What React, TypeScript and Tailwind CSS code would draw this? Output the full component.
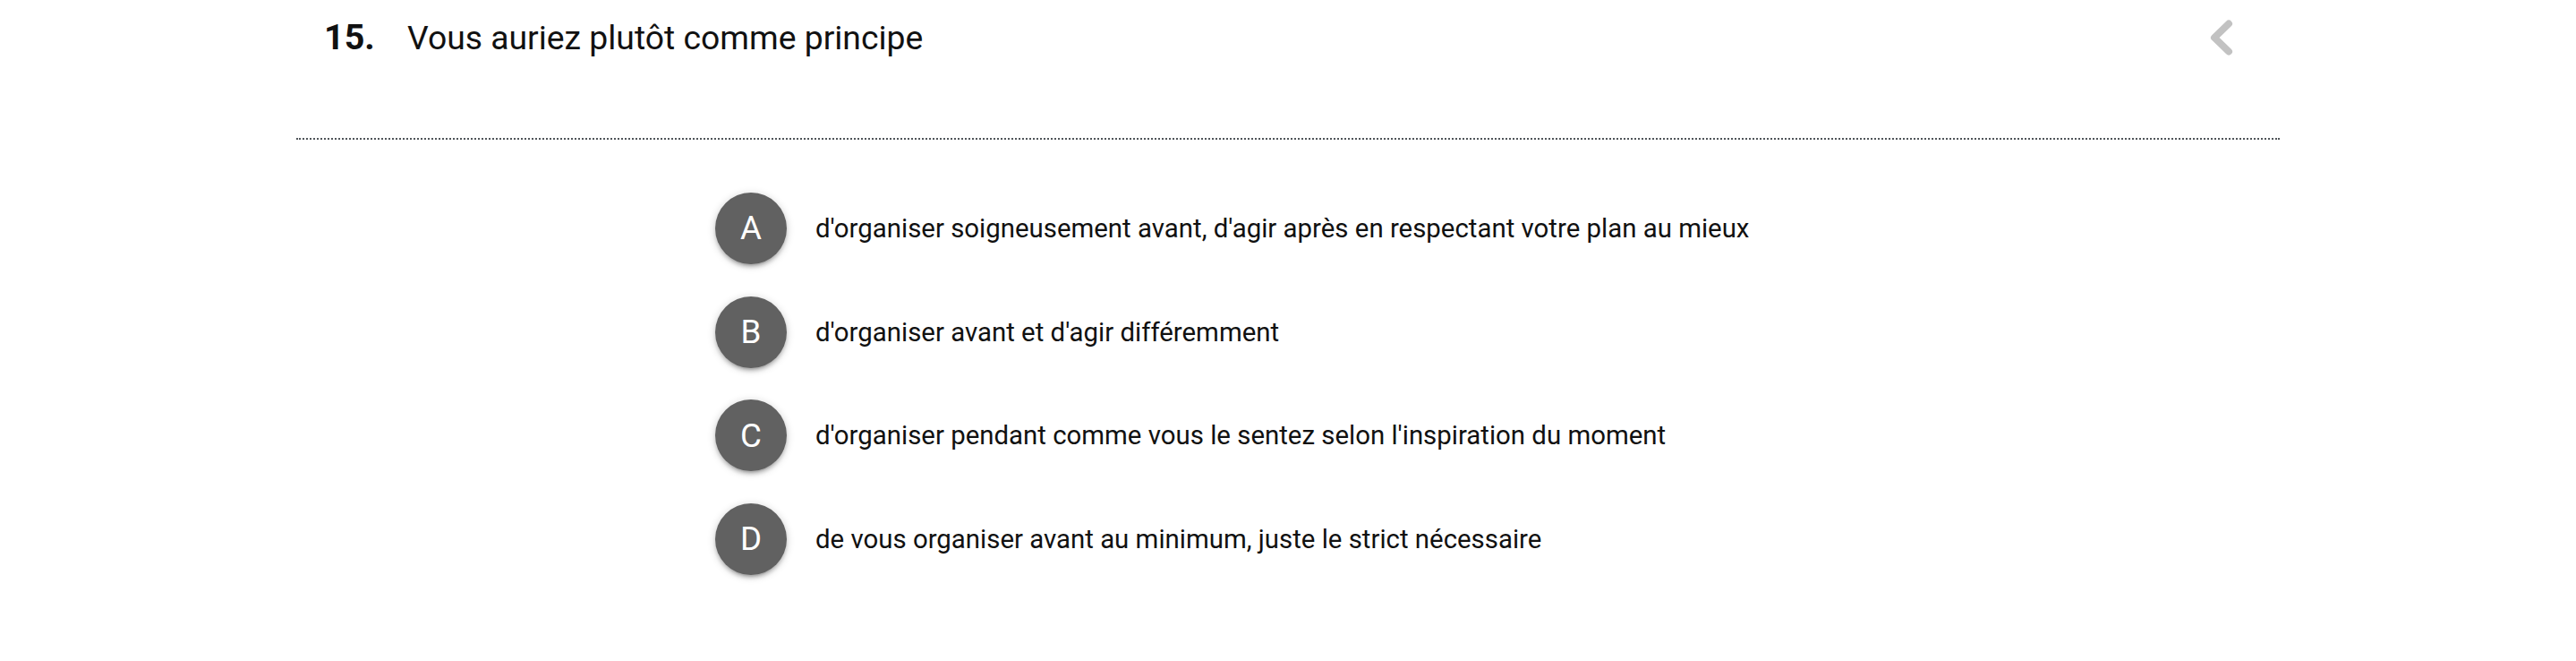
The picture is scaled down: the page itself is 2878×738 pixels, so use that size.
import React from "react";

const options = [
  { letter: "A", text: "d'organiser soigneusement avant, d'agir après en respectant votre plan au mieux" },
  { letter: "B", text: "d'organiser avant et d'agir différemment" },
  { letter: "C", text: "d'organiser pendant comme vous le sentez selon l'inspiration du moment" },
  { letter: "D", text: "de vous organiser avant au minimum, juste le strict nécessaire" },
];

export default function App() {
  return (
    <div className="min-h-[738px] w-full bg-white font-['Roboto',sans-serif]">
      <div className="mx-auto w-[2216px]">
        <div className="flex h-[84px] items-center justify-between pl-[31px] pr-[48px]">
          <div className="flex items-baseline leading-[40px]">
            <span className="w-[93px] text-[39.5px] font-bold text-[#111]">15.</span>
            <span className="text-[37.3px] text-[#111]">Vous auriez plutôt comme principe</span>
          </div>
          <svg width="30" height="46" viewBox="0 0 30 46" className="block">
            <polyline
              points="21,7.5 5,23 21,38.5"
              fill="none"
              stroke="#c2c2c2"
              strokeWidth="8"
              strokeLinecap="round"
              strokeLinejoin="round"
            />
          </svg>
        </div>
        <div className="mt-[70px] border-t-2 border-dotted border-[#50555a]" />
        <div className="mx-auto mt-[59px] flex w-[1280px] flex-col gap-[35.6px]">
          {options.map((o) => (
            <div key={o.letter} className="flex items-center">
              <div className="flex h-[80px] w-[80px] shrink-0 items-center justify-center rounded-full bg-[#616161] text-[36.7px] text-white shadow-[0_3.7px_3.7px_0_rgba(0,0,0,0.14),0_5.5px_1.8px_-3.7px_rgba(0,0,0,0.12),0_1.8px_9.2px_0_rgba(0,0,0,0.2)]">
                {o.letter}
              </div>
              <div className="ml-[32px] text-[29.4px] text-[#111]">{o.text}</div>
            </div>
          ))}
        </div>
      </div>
    </div>
  );
}
